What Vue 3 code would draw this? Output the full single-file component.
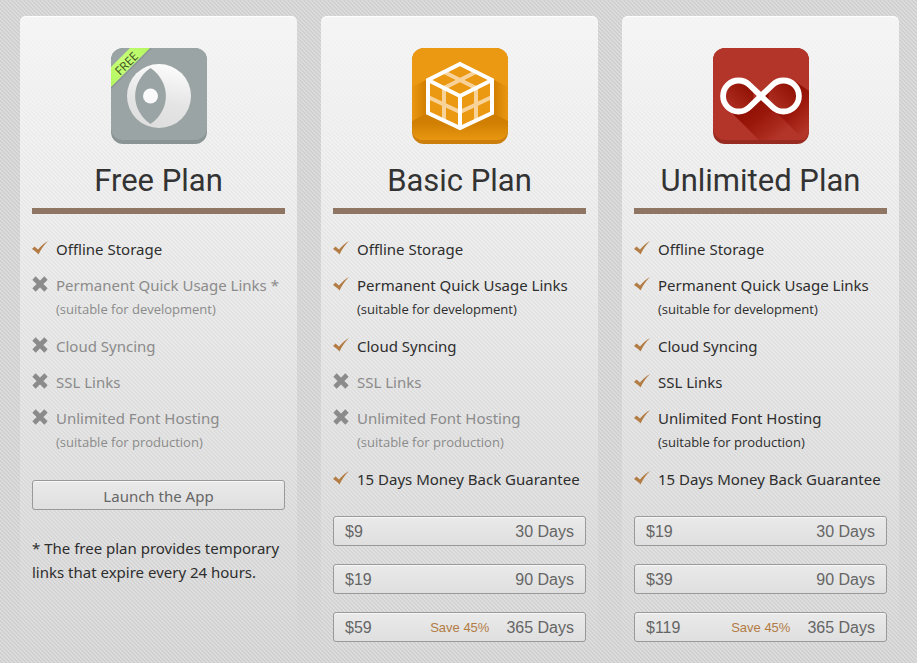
<script setup>
const texts = {
  offline: 'Offline Storage',
  quick: 'Permanent Quick Usage Links',
  cloud: 'Cloud Syncing',
  ssl: 'SSL Links',
  hosting: 'Unlimited Font Hosting',
  refund: '15 Days Money Back Guarantee',
}

const build = (level) => [
  { text: texts.offline, on: true },
  { text: level ? texts.quick : texts.quick + ' *', note: '(suitable for development)', on: level > 0 },
  { text: texts.cloud, on: level > 0 },
  { text: texts.ssl, on: level > 1 },
  { text: texts.hosting, note: '(suitable for production)', on: level > 1 },
  ...(level ? [{ text: texts.refund, on: true }] : []),
]

const plans = [
  { id: 'free', name: 'Free Plan', features: build(0), prices: [] },
  {
    id: 'basic',
    name: 'Basic Plan',
    features: build(1),
    prices: [
      { cost: '$9', days: '30 Days' },
      { cost: '$19', days: '90 Days' },
      { cost: '$59', days: '365 Days', save: 'Save 45%' },
    ],
  },
  {
    id: 'unlimited',
    name: 'Unlimited Plan',
    features: build(2),
    prices: [
      { cost: '$19', days: '30 Days' },
      { cost: '$39', days: '90 Days' },
      { cost: '$119', days: '365 Days', save: 'Save 45%' },
    ],
  },
]
</script>

<template>
  <main class="plans">
    <section v-for="plan in plans" :key="plan.id" class="plan">
      <svg v-if="plan.id === 'free'" class="logo" viewBox="0 0 96 96" aria-hidden="true">
        <defs>
          <clipPath id="free-clip"><rect width="96" height="96" rx="12" /></clipPath>
          <linearGradient id="moon" x1="0.6" y1="0" x2="0.4" y2="1">
            <stop offset="0" stop-color="#fcfcfc" />
            <stop offset="0.6" stop-color="#e4e4e4" />
            <stop offset="1" stop-color="#dedede" />
          </linearGradient>
          <linearGradient id="ribbon" x1="0" y1="1" x2="1" y2="0">
            <stop offset="0" stop-color="#b4f65c" />
            <stop offset="0.5" stop-color="#c6ff7c" />
            <stop offset="1" stop-color="#b4f65c" />
          </linearGradient>
        </defs>
        <g clip-path="url(#free-clip)">
          <rect width="96" height="96" fill="#8a9494" />
          <rect y="-12" width="96" height="104" rx="12" fill="#9ba4a4" />
          <circle cx="48" cy="48" r="32" fill="url(#moon)" />
          <path d="M39.500 20C60 34 60 62 39.500 76C19 62 19 34 39.500 20Z" fill="#9ba4a4" />
          <circle cx="39.500" cy="48" r="7.500" fill="#fafafa" />
          <path d="M0 40L40 0" stroke="#808888" stroke-width="2" opacity=".5" />
          <path d="M0 19L19 0H39L0 39Z" fill="url(#ribbon)" />
        </g>
        <text class="ribbon-text" x="15" y="20" transform="rotate(-45 15 15)" text-anchor="middle">FREE</text>
      </svg>

      <svg v-else-if="plan.id === 'basic'" class="logo" viewBox="0 0 96 96" aria-hidden="true">
        <defs>
          <clipPath id="basic-clip"><rect width="96" height="96" rx="12" /></clipPath>
          <linearGradient id="side-l" x1="0" y1="0" x2="1" y2="0">
            <stop offset="0" stop-color="#e99711" />
            <stop offset="1" stop-color="#cf7c00" />
          </linearGradient>
          <linearGradient id="side-r" x1="1" y1="0" x2="0" y2="0">
            <stop offset="0" stop-color="#e99711" />
            <stop offset="1" stop-color="#cf7c00" />
          </linearGradient>
          <linearGradient id="floor" x1="0" y1="0" x2="0" y2="1">
            <stop offset="0" stop-color="#cf7c00" />
            <stop offset="0.4" stop-color="#d08003" />
            <stop offset="1" stop-color="#e99711" />
          </linearGradient>
        </defs>
        <g clip-path="url(#basic-clip)">
          <rect width="96" height="96" fill="#cc7f0d" />
          <rect y="-12" width="96" height="104" rx="12" fill="#eb9813" />
          <path d="M16 31L0 39V73L16 66Z" fill="url(#side-l)" />
          <path d="M80 31L96 39V73L80 66Z" fill="url(#side-r)" />
          <path d="M16 65L0 73V80Q0 92 12 92H84Q96 92 96 80V73L80 65L48 82Z" fill="url(#floor)" />
          <path d="M48 16L80 32V65L48 80L16 65V32Z" fill="#eb9813" />
          <path d="M32 24L64 40V73M64 24L32 40V73M16 49L48 64L80 49" fill="none" stroke="#f7d39a" stroke-width="4" />
          <path d="M48 16L80 32V65L48 80L16 65V32ZM16 32L48 48L80 32M48 48V80" fill="none" stroke="#fff" stroke-width="4" />
        </g>
      </svg>

      <svg v-else class="logo" viewBox="0 0 96 96" aria-hidden="true">
        <defs>
          <clipPath id="unl-clip"><rect width="96" height="96" rx="12" /></clipPath>
          <linearGradient id="shade" gradientUnits="userSpaceOnUse" x1="34" y1="58" x2="62" y2="92">
            <stop offset="0" stop-color="#8f0e02" />
            <stop offset="0.400" stop-color="#9a170b" />
            <stop offset="1" stop-color="#b33428" />
          </linearGradient>
          <linearGradient id="shade-r" gradientUnits="userSpaceOnUse" x1="66" y1="58" x2="92" y2="84">
            <stop offset="0" stop-color="#8f0e02" />
            <stop offset="0.4" stop-color="#9c180c" />
            <stop offset="1" stop-color="#b33428" />
          </linearGradient>
          <linearGradient id="hole" x1="1" y1="0" x2="0" y2="1">
            <stop offset="0.1" stop-color="#8f0e02" />
            <stop offset="1" stop-color="#b33428" />
          </linearGradient>
        </defs>
        <g clip-path="url(#unl-clip)">
          <rect width="96" height="96" fill="#982b21" />
          <rect y="-12" width="96" height="104" rx="12" fill="#b33428" />
          <path d="M14 60L46 92H92L48 48L36 62Z" fill="url(#shade)" />
          <path d="M48 48L60 61L91 92Q96 88 96 80V43L83 34Z" fill="url(#shade-r)" />
          <circle cx="25.500" cy="48" r="15" fill="url(#hole)" />
          <circle cx="70.500" cy="48" r="15" fill="url(#hole)" />
          <path d="M36.500 37A15.500 15.500 0 1 0 36.500 59L59.500 37A15.500 15.500 0 1 1 59.500 59Z" fill="none" stroke="#fff" stroke-width="5.800" />
        </g>
      </svg>

      <h2>{{ plan.name }}</h2>

      <ul class="features">
        <li v-for="item in plan.features" :key="item.text" :class="{ off: !item.on }">
          <svg v-if="item.on" class="mark" viewBox="0 0 16 16" aria-hidden="true">
            <path d="M0 9L2.500 6.500L6 9.500C9 6 12 3 16 1C12 5 9 9 6.500 14.500C4.500 12 2.500 10.500 0 9Z" fill="#b27c44" />
          </svg>
          <svg v-else class="mark" viewBox="0 0 16 16" aria-hidden="true">
            <path d="M2 2L14 14M14 2L2 14" stroke="#8b8b8b" stroke-width="4.600" />
          </svg>
          <div>
            {{ item.text }}
            <small v-if="item.note">{{ item.note }}</small>
          </div>
        </li>
      </ul>

      <div v-if="plan.prices.length" class="prices">
        <button v-for="price in plan.prices" :key="price.days" type="button" class="price">
          <span>{{ price.cost }}</span>
          <span v-if="price.save" class="save">{{ price.save }}</span>
          <span class="days">{{ price.days }}</span>
        </button>
      </div>
      <template v-else>
        <button type="button" class="launch">Launch the App</button>
        <p class="note">* The free plan provides temporary links that expire every 24 hours.</p>
      </template>
    </section>
  </main>
</template>

<style>
body {
  background-color: #d5d5d5;
  background-image: linear-gradient(45deg, #dcdcdc 25%, #cfcfcf 25% 50%, #dcdcdc 50% 75%, #cfcfcf 75%);
  background-size: 4px 4px;
}
</style>

<style scoped>
.plans {
  display: grid;
  grid-template-columns: repeat(3, 1fr);
  gap: 24px;
  padding: 16px 18px 0 20px;
  color: #2e2e2e;
  font: 15px/24px "Noto Sans", "Open Sans", sans-serif;
}

.plan {
  box-sizing: border-box;
  padding: 32px 12px 20px;
  border-radius: 6px;
  background: linear-gradient(rgba(255, 255, 255, 0.75), rgba(255, 255, 255, 0));
  box-shadow: inset 0 2px 1px -1px #fff;
}

.logo {
  display: block;
  width: 96px;
  height: 96px;
  margin: 0 auto;
}

.ribbon-text {
  font: 12px "Open Sans", sans-serif;
  fill: #40521c;
}

h2 {
  margin: 16px 0 23px;
  padding-bottom: 6px;
  border-bottom: 6px solid #8f7563;
  text-align: center;
  color: #333;
  font: 400 31px/42px Roboto, sans-serif;
}

.features {
  display: grid;
  gap: 12px;
  margin: 0 0 25px;
  padding: 0;
  list-style: none;
}

.features li {
  display: flex;
  gap: 8px;
  white-space: nowrap;
}

.features .off {
  color: #8b8b8b;
}

.mark {
  flex: none;
  width: 16px;
  height: 16px;
  margin-top: 3px;
}

small {
  display: block;
  font: 13px/25px "Open Sans", sans-serif;
}

button {
  box-sizing: border-box;
  width: 100%;
  height: 30px;
  padding: 1px 11px 0;
  border: 1px solid #999;
  border-radius: 3px;
  background: linear-gradient(#eaeaea, #dfdfdf);
  box-shadow: inset 0 1px #f8f8f8;
  color: #666;
  cursor: pointer;
}

.launch {
  display: block;
  font: 15px "Noto Sans", sans-serif;
}

.prices {
  display: grid;
  gap: 18px;
}

.price {
  display: flex;
  align-items: center;
  font: 16px "Liberation Sans", Arial, sans-serif;
}

.save {
  margin-left: auto;
  color: #b27c44;
  font-size: 13px;
}

.days {
  margin-left: auto;
}

.save + .days {
  margin-left: 17px;
}

.note {
  margin: 26px 0 0;
}
</style>
